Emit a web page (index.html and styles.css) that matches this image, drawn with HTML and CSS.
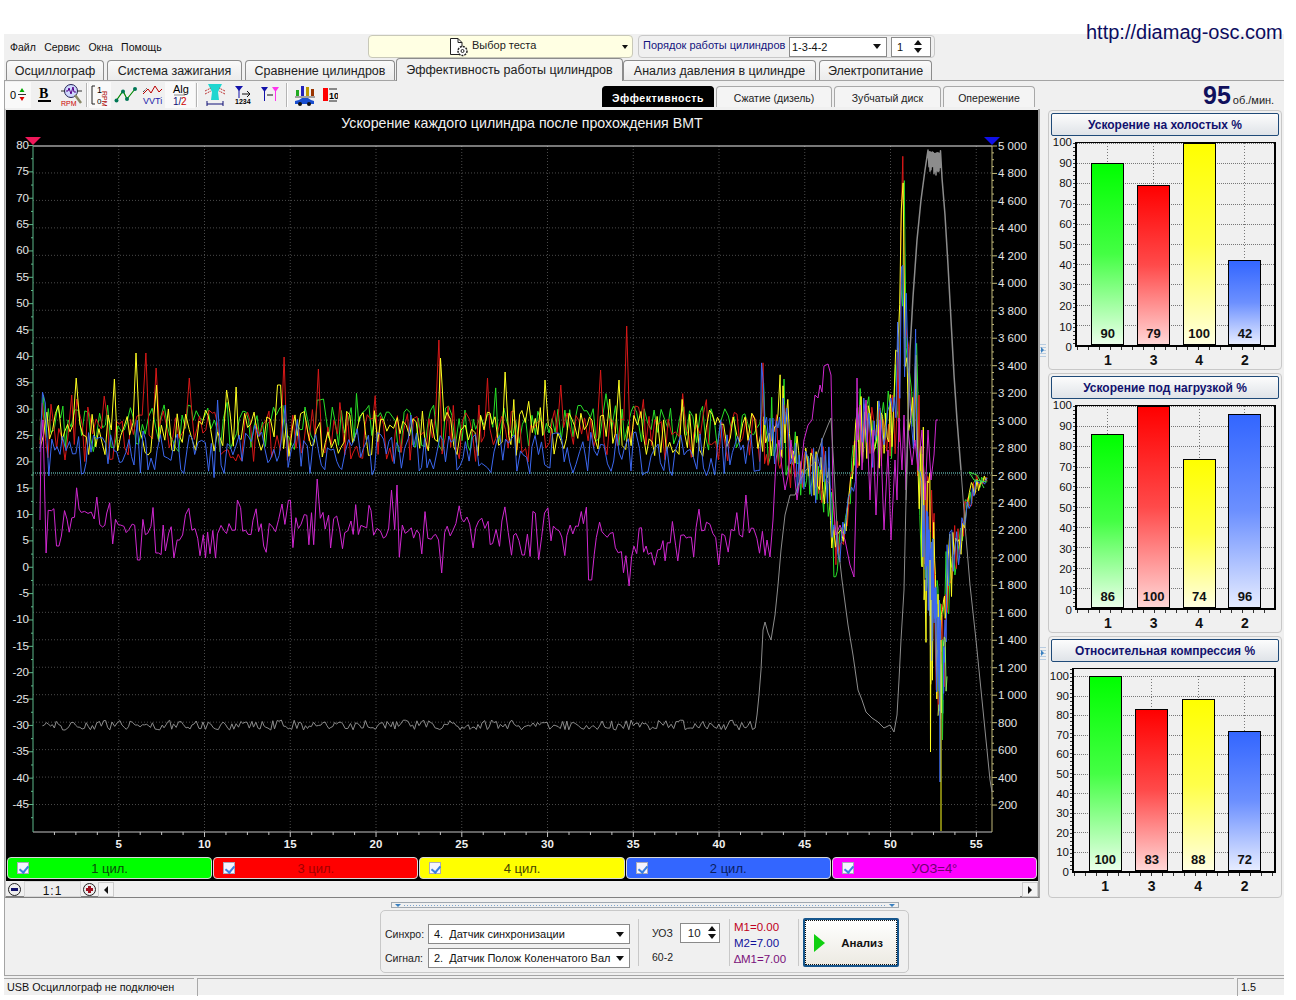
FILE: index.html
```html
<!DOCTYPE html>
<html lang="ru">
<head>
<meta charset="utf-8">
<title>Эффективность работы цилиндров</title>
<link rel="stylesheet" href="styles.css">
</head>
<body>
<a class="site-link">http://diamag-osc.com</a>
<div class="app">
  <div class="topbar">
    <nav class="menu"><span>Файл</span><span>Сервис</span><span>Окна</span><span>Помощь</span></nav>
    <div class="test-select">
      <svg class="doc-icon" width="22" height="20" viewBox="0 0 22 20"><path d="M2.500 1.500H10L14 5.500V17.500H2.500Z" fill="#fff" stroke="#222"/><path d="M10 1.500V5.500H14" fill="none" stroke="#222"/><circle cx="14.500" cy="14" r="4.500" fill="#fff" stroke="#222" stroke-dasharray="2 1" stroke-width="1.500"/><circle cx="14.500" cy="14" r="1.500" fill="none" stroke="#222"/></svg>
      <span class="test-label">Выбор теста</span>
      <i class="caret caret-end"></i>
    </div>
    <div class="order">
      <span class="order-label">Порядок работы цилиндров</span>
      <div class="combo combo-order"><span>1-3-4-2</span><i class="caret"></i></div>
      <div class="spin spin-order"><span>1</span><b class="spin-btns"><i class="up"></i><i class="down"></i></b></div>
    </div>
  </div>
  <div class="tabs">
    <div class="tab t1">Осциллограф</div>
    <div class="tab t2">Система зажигания</div>
    <div class="tab t3">Сравнение цилиндров</div>
    <div class="tab t4 active">Эффективность работы цилиндров</div>
    <div class="tab t5">Анализ давления в цилиндре</div>
    <div class="tab t6">Электропитание</div>
  </div>
  <main class="panel">
    <div class="toolbar">
      <div class="tools">
        <span class="tool on w1"><svg width="18" height="16" viewBox="0 0 18 16"><text x="1" y="12" class="ti" font-size="11">0</text><path d="M9 7.500H17" stroke="#333"/><path d="M13 1L10.500 5H15.500Z" fill="#0a0"/><path d="M13 14L10.500 10H15.500Z" fill="#d00"/></svg></span>
        <span class="tool w2"><svg width="16" height="16" viewBox="0 0 16 16"><text x="2" y="11" class="ti ti-serif" font-size="14" font-weight="bold">B</text><path d="M1 14H14" stroke="#000" stroke-width="2"/></svg></span>
        <span class="tool w3"><svg width="24" height="24" viewBox="0 0 24 24"><circle cx="11" cy="8" r="6.500" fill="#cfd8ff" stroke="#225"/><path d="M6 8L8 8L9 5L11 11L13 4L14 9H16" fill="none" stroke="#508"/><path d="M1 8H5M17 8H22" stroke="#333"/><path d="M15 12L21 20" stroke="#886" stroke-width="2.500"/><text x="1" y="23" class="ti" font-size="7" fill="#c00">RPM</text></svg></span>
        <i class="tool-sep"></i>
        <span class="tool on w4"><svg width="18" height="22" viewBox="0 0 18 22"><path d="M4 2H1V20H4" fill="none" stroke="#222"/><text x="6" y="9" class="ti" font-size="9">1</text><text x="6" y="20" class="ti" font-size="8">0</text><text x="17" y="1" class="ti" font-size="7" fill="#a00" transform="rotate(90 11 1)">RPM</text></svg></span>
        <span class="tool w5"><svg width="24" height="18" viewBox="0 0 24 18"><path d="M2 15L9 5L13 13L21 3" fill="none" stroke="#080" stroke-width="1.200"/><circle cx="2.500" cy="14.500" r="2" fill="#075"/><circle cx="9" cy="5.500" r="2" fill="#075"/><circle cx="13" cy="13" r="2" fill="#075"/><circle cx="21" cy="3" r="2" fill="#075"/></svg></span>
        <span class="tool w6"><svg width="22" height="22" viewBox="0 0 22 22"><path d="M1 10L6 5L9 9L13 2L17 8L20 5" fill="none" stroke="#b00"/><path d="M1 8L5 4" stroke="#000" stroke-dasharray="1 1"/><text x="1" y="20" class="ti" font-size="9" fill="#22a">VVTi</text></svg></span>
        <span class="tool on w7"><svg width="18" height="24" viewBox="0 0 18 24"><text x="2" y="10" class="ti" font-size="11">Alg</text><path d="M3 12H14" stroke="#888"/><text x="2" y="22" class="ti" font-size="10" fill="#117">1/</text><text x="10" y="22" class="ti" font-size="10" fill="#c00">2</text></svg></span>
        <i class="tool-sep"></i>
        <span class="tool w8"><svg width="22" height="24" viewBox="0 0 22 24"><path d="M4 1H18L14 9L15 17H7L8 9Z" fill="#1fd6d0"/><path d="M1 8L7 5M21 8L15 5M1 11L7 8M21 11L15 8" stroke="#b33" stroke-dasharray="2 1"/><path d="M3 21H19M3 18V23M19 18V23" stroke="#117"/></svg></span>
        <span class="tool w9"><svg width="18" height="20" viewBox="0 0 18 20"><path d="M1 1H9L5 6Z" fill="#11a"/><path d="M5 5V13" stroke="#11a"/><path d="M8 9H16M13 6L16 9L13 12" fill="none" stroke="#111"/><text x="1" y="19" class="ti" font-size="7" font-weight="bold">1234</text></svg></span>
        <span class="tool w10"><svg width="18" height="18" viewBox="0 0 18 18"><path d="M0 1H7L3.500 6Z" fill="#11a"/><path d="M3.500 5V15" stroke="#11a"/><path d="M11 1H18L14.500 6Z" fill="#f3e"/><path d="M14.500 5V15" stroke="#f3e"/><path d="M6 9H12" stroke="#111"/></svg></span>
        <i class="tool-sep"></i>
        <span class="tool w11"><svg width="22" height="22" viewBox="0 0 22 22"><rect x="2" y="6" width="3" height="6" fill="#2a2"/><rect x="7" y="2" width="3" height="10" fill="#22b"/><rect x="12" y="3" width="3" height="9" fill="#b90"/><rect x="17" y="5" width="3" height="7" fill="#930"/><path d="M1 13H21" stroke="#555"/><path d="M1 20V17L5 16L8 14H14L17 16L20 17V20Z" fill="#1a4fd0"/><circle cx="6" cy="20" r="2" fill="#111"/><circle cx="15" cy="20" r="2" fill="#111"/></svg></span>
        <span class="tool w12"><svg width="16" height="18" viewBox="0 0 16 18"><rect x="1" y="2" width="5" height="13" fill="#f00"/><text x="7" y="13" class="ti" font-size="9" font-weight="bold">10</text><path d="M7 3H15M7 15H15" stroke="#222"/></svg></span>
      </div>
      <div class="subtabs">
        <div class="subtab s1 active">Эффективность</div>
        <div class="subtab s2">Сжатие (дизель)</div>
        <div class="subtab s3">Зубчатый диск</div>
        <div class="subtab s4">Опережение</div>
      </div>
      <div class="rpm"><b>95</b><span>об./мин.</span></div>
    </div>
    <div class="work">
      <section class="scope">
        <svg id="chart" class="chart" width="1032" height="747" viewBox="6 110 1032 747"></svg>
        <div class="legend">
          <label class="leg green"><i class="check"></i><span>1 цил.</span></label>
          <label class="leg red"><i class="check"></i><span>3 цил.</span></label>
          <label class="leg yellow"><i class="check"></i><span>4 цил.</span></label>
          <label class="leg blue"><i class="check"></i><span>2 цил.</span></label>
          <label class="leg magenta"><i class="check"></i><span>УОЗ=4°</span></label>
        </div>
        <div class="zoombar">
          <i class="zoom-btn minus"></i>
          <span class="scale">1:1</span>
          <i class="zoom-btn plus"></i>
          <i class="arrow-btn left"></i>
          <span class="track"></span>
          <i class="arrow-btn right"></i>
        </div>
      </section>
      <div class="splitter"><i></i><i class="second"></i></div>
      <aside class="stats">
        <section class="stat">
          <h2 class="stat-head">Ускорение на холостых %</h2>
          <div class="stat-body">
            <div class="yaxis"><span>100</span><span>90</span><span>80</span><span>70</span><span>60</span><span>50</span><span>40</span><span>30</span><span>20</span><span>10</span><span>0</span></div>
            <div class="plot"><div class="area">
              <div class="hgrid"><i></i><i></i><i></i><i></i><i></i><i></i><i></i><i></i><i></i><i></i></div>
              <div class="vgrid"><i></i><i></i><i></i><i></i></div>
              <div class="bars">
                <div class="slot"><div class="bar g" style="height:90%"><span>90</span></div></div>
                <div class="slot"><div class="bar r" style="height:79%"><span>79</span></div></div>
                <div class="slot"><div class="bar y" style="height:100%"><span>100</span></div></div>
                <div class="slot"><div class="bar b" style="height:42%"><span>42</span></div></div>
              </div>
            </div></div>
          </div>
          <div class="xaxis"><span>1</span><span>3</span><span>4</span><span>2</span></div>
        </section>
        <section class="stat">
          <h2 class="stat-head">Ускорение под нагрузкой %</h2>
          <div class="stat-body">
            <div class="yaxis"><span>100</span><span>90</span><span>80</span><span>70</span><span>60</span><span>50</span><span>40</span><span>30</span><span>20</span><span>10</span><span>0</span></div>
            <div class="plot"><div class="area">
              <div class="hgrid"><i></i><i></i><i></i><i></i><i></i><i></i><i></i><i></i><i></i><i></i></div>
              <div class="vgrid"><i></i><i></i><i></i><i></i></div>
              <div class="bars">
                <div class="slot"><div class="bar g" style="height:86%"><span>86</span></div></div>
                <div class="slot"><div class="bar r" style="height:100%"><span>100</span></div></div>
                <div class="slot"><div class="bar y" style="height:74%"><span>74</span></div></div>
                <div class="slot"><div class="bar b" style="height:96%"><span>96</span></div></div>
              </div>
            </div></div>
          </div>
          <div class="xaxis"><span>1</span><span>3</span><span>4</span><span>2</span></div>
        </section>
        <section class="stat wide">
          <h2 class="stat-head">Относительная компрессия %</h2>
          <div class="stat-body">
            <div class="yaxis"><span>100</span><span>90</span><span>80</span><span>70</span><span>60</span><span>50</span><span>40</span><span>30</span><span>20</span><span>10</span><span>0</span></div>
            <div class="plot"><div class="area">
              <div class="hgrid"><i></i><i></i><i></i><i></i><i></i><i></i><i></i><i></i><i></i><i></i></div>
              <div class="vgrid"><i></i><i></i><i></i><i></i></div>
              <div class="bars">
                <div class="slot"><div class="bar g" style="height:100%"><span>100</span></div></div>
                <div class="slot"><div class="bar r" style="height:83%"><span>83</span></div></div>
                <div class="slot"><div class="bar y" style="height:88%"><span>88</span></div></div>
                <div class="slot"><div class="bar b" style="height:72%"><span>72</span></div></div>
              </div>
            </div></div>
          </div>
          <div class="xaxis"><span>1</span><span>3</span><span>4</span><span>2</span></div>
        </section>
      </aside>
    </div>
    <div class="lower">
      <div class="expander"><i class="tri"></i><span class="dots"></span><i class="tri"></i></div>
      <div class="controls">
        <div class="ctl-signals">
          <div class="ctl-row"><label>Синхро:</label><div class="combo combo-wide"><span>4.&nbsp; Датчик синхронизации</span><i class="caret"></i></div></div>
          <div class="ctl-row"><label>Сигнал:</label><div class="combo combo-wide"><span>2.&nbsp; Датчик Полож Коленчатого Вал</span><i class="caret"></i></div></div>
        </div>
        <i class="ctl-sep"></i>
        <div class="ctl-uoz">
          <div class="uoz-row"><span>УОЗ</span><div class="spin spin-uoz"><span>10</span><b class="spin-btns"><i class="up"></i><i class="down"></i></b></div></div>
          <div class="teeth">60-2</div>
        </div>
        <i class="ctl-sep"></i>
        <div class="markers">
          <span class="m1">M1=0.00</span>
          <span class="m2">M2=7.00</span>
          <span class="m3">∆M1=7.00</span>
        </div>
        <i class="ctl-sep"></i>
        <button class="analyze"><i class="play"></i><span>Анализ</span></button>
      </div>
    </div>
  </main>
  <footer class="status">
    <span class="st1">USB Осциллограф не подключен</span>
    <span class="st2"></span>
    <span class="st3">1.5</span>
  </footer>
</div>
<script src="script.js"></script>
</body>
</html>
```
FILE: styles.css
```css
* { box-sizing: border-box; }
html, body { margin: 0; padding: 0; background: #fff; }
body { width: 1296px; height: 1000px; overflow: hidden; font-family: "Liberation Sans", Arial, sans-serif; font-size: 11px; color: #111; }
i { display: block; font-style: normal; }

.site-link { position: absolute; left: 1086px; top: 20px; font-size: 20px; line-height: 24px; color: #0c0c60; }
.app { margin: 34px 0 0 4px; width: 1280px; height: 961px; background: #f0f0f0; display: flex; flex-direction: column; }

.topbar { height: 24px; display: flex; align-items: flex-start; }
.menu { width: 364px; padding: 7px 0 0 6px; display: flex; gap: 8.3px; line-height: 13px; font-size: 10.5px; }
.test-select { width: 265px; height: 23px; margin-top: 1px; border: 1px solid #c8c8b8; border-radius: 4px; background: #ffffe3; display: flex; align-items: center; padding: 0 4px 0 79px; }
.doc-icon { flex: none; margin-right: 2px; }
.test-label { flex: 1; font-size: 11px; line-height: 13px; padding-bottom: 2px; color: #222; }
.caret { width: 0; height: 0; border-left: 4px solid transparent; border-right: 4px solid transparent; border-top: 5px solid #111; flex: none; }
.caret-end { border-left-width: 3px; border-right-width: 3px; border-top-width: 4px; }
.order { margin-left: 5px; width: 297px; height: 23px; margin-top: 1px; border: 1px solid #c8c8c8; border-radius: 4px; display: flex; align-items: center; padding-left: 4px; }
.order-label { width: 146px; color: #14147e; font-size: 11px; line-height: 13px; padding-bottom: 2px; white-space: nowrap; }
.combo { background: #fff; border: 1px solid #8a8a8a; display: flex; align-items: center; justify-content: space-between; white-space: nowrap; font-size: 11px; }
.combo-order { width: 98px; height: 20px; padding: 0 5px 0 2px; }
.spin { background: #fff; border: 1px solid #8a8a8a; display: flex; align-items: center; justify-content: space-between; font-size: 11px; }
.spin-order { width: 40px; height: 20px; margin-left: 4px; padding: 0 8px 0 5px; }
.spin-btns { display: flex; flex-direction: column; gap: 3px; }
.up, .down { width: 0; height: 0; border-left: 4px solid transparent; border-right: 4px solid transparent; }
.up { border-bottom: 5px solid #111; }
.down { border-top: 5px solid #111; }

.tabs { height: 22px; display: flex; align-items: flex-end; gap: 3px; padding-left: 2px; position: relative; z-index: 2; }
.tab { height: 20px; border: 1px solid #8c8c8c; border-bottom: 0; border-radius: 4px 4px 0 0; background: linear-gradient(#fafafa, #ebebeb); font-size: 12.5px; line-height: 20px; text-align: center; white-space: nowrap; color: #222; }
.tab.active { height: 23px; margin: 0 -3px -1px -2px; background: #f0f0f0; line-height: 22px; }
.t1 { width: 98px; } .t2 { width: 135px; } .t3 { width: 150px; } .t4 { width: 227px; } .t5 { width: 193px; } .t6 { width: 113px; }

.panel { height: 896px; border: 1px solid #a4a4a4; border-width: 1px 0 1px 1px; display: flex; flex-direction: column; background: #f0f0f0; }
.toolbar { height: 28px; display: flex; position: relative; }
.tools { width: 597px; height: 27px; display: flex; align-items: center; }
.tool { height: 26px; display: flex; align-items: center; justify-content: center; flex: none; }
.tool.on { background: #f9f9f9; }
.ti { font-family: "Liberation Sans", Arial, sans-serif; }
.ti-serif { font-family: "Liberation Serif", serif; }
.w1 { width: 26px; } .w2 { width: 27px; } .w3 { width: 27px; } .w4 { width: 22px; } .w5 { width: 30px; } .w6 { width: 24px; } .w7 { width: 30px; }
.w8 { width: 31px; } .w9 { width: 25px; } .w10 { width: 30px; } .w11 { width: 32px; } .w12 { width: 18px; }
.tool-sep { width: 2px; height: 24px; background: #b4b4b4; border-right: 1px solid #fff; margin: 0 1px; flex: none; }
.subtabs { display: flex; align-items: flex-end; height: 26px; gap: 2px; padding-top: 5px; }
.subtab { height: 21px; border: 1px solid #a8a8a8; border-bottom: 0; border-radius: 4px 4px 0 0; font-size: 10.5px; line-height: 23px; text-align: center; background: #f4f4f4; color: #222; white-space: nowrap; }
.subtab.active { background: #000; color: #fff; border-color: #000; font-weight: bold; letter-spacing: .55px; }
.s1 { width: 112px; } .s2 { width: 116px; } .s3 { width: 107px; } .s4 { width: 92px; }
.rpm { position: absolute; left: 1198px; top: 1px; display: flex; align-items: baseline; gap: 2px; color: #10105c; line-height: 26px; }
.rpm b { font-size: 25px; }
.rpm span { font-size: 11px; color: #222; }

.work { height: 789px; display: flex; }
.scope { width: 1035px; border-right: 2px solid #a0a0a0; border-bottom: 2px solid #808080; border-left: 1px solid #c8c8c8; display: flex; flex-direction: column; }
.chart { display: block; flex: none; background: #000; margin-top: 1px; }
.chart text { font-family: "Liberation Sans", Arial, sans-serif; }
.legend { height: 24px; background: #000; display: flex; gap: 1px; padding: 0 1px; width: 1032px; flex: none; }
.leg { flex: 1; height: 22px; border: 1px solid #d8d8d8; border-radius: 4px; display: flex; align-items: center; position: relative; justify-content: center; font-size: 13px; }
.check { position: absolute; left: 9px; top: 4px; width: 12px; height: 12px; background: #f4f4ff; border: 1px solid #aab; }
.check::after { content: ""; position: absolute; left: 3px; top: 1px; width: 4px; height: 7px; border: solid #3a80e0; border-width: 0 2px 2px 0; transform: rotate(40deg); }
.green { background: #00ff00; color: #0a4a0a; }
.red { background: #ff0000; color: #a00000; }
.yellow { background: #ffff00; color: #444400; }
.blue { background: #3366ff; color: #0a1e60; }
.magenta { background: #ff00ff; color: #700070; }
.zoombar { height: 16px; display: flex; align-items: center; width: 1032px; flex: none; }
.zoom-btn { width: 13px; height: 13px; margin-left: 2px; border-radius: 50%; border: 1px solid #222; background: #eee; position: relative; flex: none; }
.minus::after { content: ""; position: absolute; left: 2px; top: 4px; width: 7px; height: 3px; background: #12126a; }
.plus::before, .plus::after { content: ""; position: absolute; background: #a01020; }
.plus::before { left: 2px; top: 4px; width: 7px; height: 3px; }
.plus::after { left: 4px; top: 2px; width: 3px; height: 7px; }
.scale { width: 57px; height: 16px; margin-left: 3px; font-size: 12px; line-height: 18px; text-align: center; background: #eee; border: 1px solid #d6d6d6; letter-spacing: 1px; flex: none; }
.arrow-btn { width: 16px; height: 15px; background: #f4f4f4; border: 1px solid #ccc; position: relative; flex: none; margin-left: 2px; }
.arrow-btn::after { content: ""; position: absolute; top: 3px; left: 5px; border-top: 4px solid transparent; border-bottom: 4px solid transparent; }
.left::after { border-right: 4px solid #111; }
.right::after { border-left: 4px solid #111; }
.track { flex: 1; height: 15px; background: #f0f0f0; }

.splitter { width: 8px; position: relative; }
.splitter i { position: absolute; left: 0; top: 235px; width: 6px; height: 14px; background: repeating-linear-gradient(#b8cce0 0 1px, #f0f0f0 1px 3px); }
.splitter i::after { content: ""; position: absolute; left: 1px; top: 3px; border-top: 3px solid transparent; border-bottom: 3px solid transparent; border-left: 3px solid #3a80c0; }
.splitter .second { top: 538px; }
.stats { width: 235px; padding-top: 1px; display: flex; flex-direction: column; gap: 3px; }
.stat { width: 234px; height: 260px; border: 1px solid #c8c8c8; border-radius: 4px; padding: 2px 2px 0; }
.stat-head { margin: 0 0 6px; height: 23px; border: 1px solid #1f4a78; border-radius: 2px; background: linear-gradient(#fcfcfc, #dfe3e8); font-size: 12px; line-height: 22px; font-weight: bold; text-align: center; color: #12126e; }
.stat-body { display: flex; height: 205px; }
.yaxis { width: 24px; height: 219px; margin-top: -7px; flex: none; display: flex; flex-direction: column; justify-content: space-between; align-items: flex-end; padding-right: 3px; font-size: 11.5px; line-height: 14px; color: #111; }
.plot { width: 201px; height: 205px; border: solid #000; border-width: 1px 2px 2px 2px; display: flex; flex-direction: column; justify-content: flex-end; position: relative; }
.plot::before { content: ""; position: absolute; left: -4px; top: 0; bottom: 0; width: 2px; background: repeating-linear-gradient(#333 0 1px, transparent 1px 4px); }
.plot::after { content: ""; position: absolute; left: 0; right: 0; bottom: -5px; height: 3px; background: repeating-linear-gradient(90deg, #333 0 1px, transparent 1px 11px); }
.area { height: 100%; position: relative; flex: none; }
.hgrid { position: absolute; inset: 0; display: flex; flex-direction: column; }
.hgrid i { flex: 1; border-top: 1px dotted #777; }
.vgrid { position: absolute; inset: 0; padding-left: 8px; display: flex; }
.vgrid i { width: 45.7px; height: 100%; background: repeating-linear-gradient(#777 0 1px, transparent 1px 3px) center / 1px 100% no-repeat; }
.bars { position: absolute; inset: 0; padding-left: 8px; display: flex; align-items: flex-end; }
.slot { width: 45.7px; height: 100%; display: flex; justify-content: center; align-items: flex-end; }
.bar { width: 33px; border: 1px solid #000; display: flex; justify-content: center; align-items: flex-end; position: relative; }
.bar span { font-size: 13px; font-weight: bold; line-height: 14px; margin-bottom: 3px; color: #111; }
.bar.g { background: linear-gradient(#00ff00 0, #44ff44 50%, #eaffea 100%); }
.bar.r { background: linear-gradient(#ff0000 0, #ff4a4a 50%, #ffd6d6 100%); }
.bar.y { background: linear-gradient(#ffff00 0, #ffff4a 50%, #ffffe0 100%); }
.bar.b { background: linear-gradient(#3366ff 0, #6c90ff 50%, #e6ecff 100%); }
.xaxis { display: flex; padding-left: 34px; height: 21px; align-items: flex-end; font-size: 14px; font-weight: bold; line-height: 16px; color: #111; }
.xaxis span { width: 45.7px; text-align: center; }
.wide { height: 262px; }
.wide .yaxis { width: 21px; height: 210px; margin-top: 1px; }
.wide .plot { width: 204px; }
.wide .area { height: 195px; }
.wide .xaxis { padding-left: 31px; }
.wide .slot, .wide .vgrid i, .wide .xaxis span { width: 46.5px; }

.lower { height: 77px; padding-left: 375px; position: relative; }
.expander { width: 508px; height: 6px; margin: 4px 0 0 11px; border: 1px solid #a0a8b0; display: flex; align-items: center; justify-content: space-between; padding: 0 3px; }
.tri { width: 0; height: 0; border-left: 3px solid transparent; border-right: 3px solid transparent; border-top: 3px solid #3a80c0; flex: none; }
.dots { flex: 1; height: 1px; margin: 0 3px; background: repeating-linear-gradient(90deg, #7aa4d0 0 1px, transparent 1px 3px); }
.controls { width: 529px; height: 63px; margin-top: 2px; border: 1px solid #c8c8c8; border-radius: 5px; display: flex; align-items: center; padding-left: 4px; }
.ctl-signals { width: 253px; flex: none; display: flex; flex-direction: column; gap: 4px; padding-top: 9px; }
.ctl-row { display: flex; align-items: center; height: 20px; }
.ctl-row label { width: 43px; font-size: 10.5px; color: #222; flex: none; }
.combo-wide { width: 202px; height: 20px; padding: 0 5px; }
.ctl-sep { width: 1px; height: 47px; background: #c8c8c8; margin-top: 2px; flex: none; }
.ctl-uoz { width: 90px; flex: none; padding: 2px 0 0 13px; font-size: 10.5px; color: #222; }
.uoz-row { display: flex; align-items: center; gap: 6px; height: 20px; }
.spin-uoz { width: 40px; height: 20px; margin-left: 1px; padding: 0 3px 0 7px; font-size: 11.5px; }
.teeth { margin-top: 8px; }
.markers { width: 68px; flex: none; padding-left: 4px; display: flex; flex-direction: column; gap: 3px; font-size: 11.5px; line-height: 13px; margin-top: 4px; }
.m1 { color: #c00020; } .m2 { color: #10109a; } .m3 { color: #7a107a; }
.analyze { width: 96px; height: 49px; margin-left: 4px; margin-top: 2px; padding: 0; border: 2px solid #15558c; border-radius: 2px; outline: 1px dotted #111; outline-offset: -3px; background: linear-gradient(#fff, #eceae2); font: bold 11.5px "Liberation Sans", Arial, sans-serif; color: #111; position: relative; }
.play { position: absolute; left: 9px; top: 14px; width: 0; height: 0; border-left: 11px solid #10d010; border-top: 9px solid transparent; border-bottom: 9px solid transparent; }
.analyze span { position: relative; left: 11px; }

.status { height: 19px; margin-top: 2px; display: flex; gap: 3px; font-size: 10.8px; line-height: 17px; }
.status span { display: block; border: solid #a8a8a8; border-width: 1px 0 0 1px; padding-left: 3px; }
.st1 { width: 190px; border-left-width: 0 !important; } .st2 { flex: 1; } .st3 { width: 47px; }
```
FILE: script.js
```js
(function () {
  var svg = document.getElementById('chart');
  var seed = 7741;
  function rnd() { seed = (seed * 1664525 + 1013904223) >>> 0; var t = seed ^ (seed >>> 15); t = Math.imul(t ^ (t >>> 7), 0x6d2b79f5) >>> 0; return t / 4294967296; }
  var out = [];
  function line(x1, y1, x2, y2, cls) { out.push('<line x1="' + x1 + '" y1="' + y1 + '" x2="' + x2 + '" y2="' + y2 + '" ' + cls + '/>'); }
  function text(x, y, s, a) { out.push('<text x="' + x + '" y="' + y + '" ' + a + '>' + s + '</text>'); }
  function poly(pts, color, w) { out.push('<polyline fill="none" stroke="' + color + '" stroke-width="' + (w || 1) + '" stroke-linejoin="round" points="' + pts.map(function (p) { return p[0].toFixed(1) + ',' + p[1].toFixed(1); }).join(' ') + '"/>'); }
  function interp(tab, x) {
    if (x <= tab[0][0]) return tab[0].slice(1);
    for (var i = 1; i < tab.length; i++) {
      if (x <= tab[i][0]) {
        var a = tab[i - 1], b = tab[i], k = (x - a[0]) / (b[0] - a[0]), r = [];
        for (var j = 1; j < a.length; j++) r.push(a[j] + (b[j] - a[j]) * k);
        return r;
      }
    }
    return tab[tab.length - 1].slice(1);
  }
  var L = 33, R = 992, T = 146, B = 832;
  var grid = 'stroke="#4a4a4a" stroke-dasharray="1 2"';
  var i, x, y;
  for (i = 1; i < 25; i++) { y = B - i * 27.46; line(L, y, R, y, grid); }
  for (i = 5; i <= 55; i += 5) { x = L + i * 17.15; line(x, T, x, B, grid); }
  line(33, 473, 992, 473, 'stroke="#7fe8e0" stroke-dasharray="1 1"');
  line(L, T, R, T, 'stroke="#f0f0f0"');
  line(L, B, R, B, 'stroke="#c4c4c4"');
  line(L, T, L, B, 'stroke="#5cb88a"');
  line(R, T, R, B, 'stroke="#c0b878"');
  // axis ticks + labels
  var lab = 'fill="#e4e4e4" font-size="11.5"';
  for (i = 0; i <= 25; i++) {
    y = 145.5 + i * 26.36;
    line(L - 5, y, L, y, 'stroke="#5cb88a"');
    line(L - 2, y + 13.2, L, y + 13.2, 'stroke="#5cb88a"');
    text(29, y + 3.5, String(80 - i * 5), lab + ' text-anchor="end"');
  }
  for (i = 0; i <= 24; i++) {
    y = T + i * 27.46;
    line(R, y, R + 5, y, 'stroke="#c0b878"');
    for (var m = 1; m < 4; m++) if (i < 24) line(R, y + m * 6.86, R + 2, y + m * 6.86, 'stroke="#c0b878"');
    var v = 5000 - i * 200;
    var s = v >= 1000 ? Math.floor(v / 1000) + ' ' + (v % 1000 === 0 ? '000' : String(v % 1000).padStart(3, '0')) : String(v);
    text(998, y + 4, s, lab);
  }
  for (i = 1; i <= 44; i++) {
    x = L + i * 21.44;
    var major = i % 4 === 0;
    line(x, B, x, B + (major ? 5 : 3), 'stroke="#c4c4c4"');
  }
  for (i = 5; i <= 55; i += 5) text(L + i * 17.15, 848, String(i), 'fill="#f0f0f0" font-size="11.5" font-weight="bold" text-anchor="middle"');
  text(522, 128, 'Ускорение каждого цилиндра после прохождения ВМТ', 'fill="#f0f0f0" font-size="14.2" text-anchor="middle"');
  out.push('<path d="M25 137H41L33 145Z" fill="#f0185a"/><path d="M984 137H1000L992 145Z" fill="#1010e8"/>');

  // envelope of the disturbed end of the trace
  var env = [
    [758, 420, 470], [761, 310, 470], [765, 375, 470], [770, 405, 465], [775, 375, 470], [783, 352, 470], [790, 420, 490],
    [800, 442, 495], [810, 445, 500], [820, 440, 510], [830, 430, 520], [834, 480, 586], [838, 530, 575], [843, 520, 548],
    [848, 500, 522], [852, 455, 500], [858, 385, 470], [865, 395, 462], [875, 395, 472], [885, 400, 465], [893, 370, 465],
    [896, 340, 465], [900, 260, 450], [902, 160, 420], [904, 150, 400], [906, 260, 430], [908, 340, 450], [912, 370, 480],
    [914, 400, 470], [916, 305, 470], [918, 330, 500], [921, 400, 560],
    [925, 420, 630], [930, 470, 700], [935, 500, 670], [940, 600, 770], [943, 600, 735], [948, 500, 620], [953, 510, 590],
    [958, 520, 575], [965, 495, 530], [975, 475, 495], [987, 476, 482]
  ];
  var specs = [
    { c: '#28e028', top: 405, bot: 452, sp: [[42, 395], [318, 400], [761, 308]] },
    { c: '#d81818', top: 410, bot: 462, sp: [[145, 353], [155, 368], [188, 378], [283, 357], [318, 369], [440, 340], [560, 385], [628, 326], [487, 378], [602, 370], [903, 150], [72, 395]] },
    { c: '#ffff20', top: 410, bot: 458, sp: [[75, 378], [115, 379], [136, 353], [156, 385], [225, 390], [236, 387], [279, 385], [440, 358], [506, 372], [545, 380], [618, 380], [761, 312], [903, 158]] },
    { c: '#3c68f0', top: 432, bot: 478, sp: [[42, 392], [46, 403], [218, 400], [286, 405], [917, 302], [898, 300]] }
  ];
  specs.forEach(function (sp, idx) {
    var pts = [[40, 440 + idx * 4]], x = 40;
    while (x < 758) {
      x += 2.2 + rnd() * 1.6;
      var r = rnd(), yy = sp.top + (sp.bot - sp.top) * (r * r * .4 + r * .6);
      if (rnd() < .04) yy = sp.top - rnd() * 18;
      sp.sp.forEach(function (q) { if (Math.abs(q[0] - x) < 1.8 && q[0] < 758) yy = q[1]; });
      pts.push([x, yy]);
    }
    while (x < 987) {
      var st = x > 920 && x < 948 ? .7 : 1.3;
      x += st + rnd() * .8;
      var e = interp(env, x), k = rnd();
      var bias = idx === 3 && x > 920 ? .2 + k * .8 : k;
      var yy2 = e[0] + (e[1] - e[0]) * bias;
      if (idx < 3 && x > 900 && x < 906 && rnd() < .4) yy2 = e[0] + rnd() * 30;
      if (idx === 0 && x > 832 && x < 838) yy2 = e[1] - rnd() * 12;
      pts.push([Math.min(x, 987), yy2]);
    }
    poly(pts, sp.c);
  });
  // solid core of the deep plunge
  var core = [], cx;
  for (cx = 926; cx < 945; cx += .45) { var ce = interp(env, cx); core.push([cx, ce[0] + (ce[1] - ce[0]) * (.25 + rnd() * .55)]); }
  poly(core, '#3c68f0', 1.3);
  var gl = []; for (cx = 938; cx < 947; cx += .9) gl.push([cx, 590 + rnd() * 130]); poly(gl, '#90e860');
  poly([[930, 560], [930.5, 752], [931, 600]], '#ffff20');
  poly([[939.5, 600], [940, 782], [940.5, 620]], '#3c68f0');
  poly([[941, 640], [941, 831]], '#ffff20');
  poly([[942.5, 640], [942.5, 740], [943, 700]], '#28c828');
  poly([[984, 488], [977, 475], [969, 472], [974, 480], [987, 482]], '#40e040');

  // ignition advance (magenta)
  var mTrend = [[40, 515], [80, 512], [110, 522], [200, 535], [320, 520], [360, 530], [430, 535], [480, 520], [520, 535], [600, 530], [630, 555], [700, 530], [760, 535]];
  var mSp = [[42, 470], [46, 553], [58, 546], [137, 560], [140, 560], [157, 553], [175, 558], [317, 479], [238, 500], [442, 573], [397, 485], [523, 555], [590, 580], [628, 586], [392, 490], [720, 565], [745, 495], [770, 560]];
  var mp = [[40, 520], [41, 440], [43, 420]], mx = 44;
  while (mx < 765) {
    mx += 2 + rnd() * 1.5;
    var t = interp(mTrend, mx)[0];
    var a = rnd();
    var yy3 = t + (a - .5) * (a > .85 || a < .15 ? 52 : 24);
    mSp.forEach(function (q) { if (Math.abs(q[0] - mx) < 1.8) yy3 = q[1]; });
    mp.push([mx, yy3]);
  }
  [[767, 540], [770, 557], [773, 520], [776, 460], [779, 440], [782, 468], [785, 490], [788, 476], [791, 440], [794, 470], [797, 500], [800, 478], [804, 440], [808, 425], [812, 420], [815, 395], [818, 398], [820, 385], [822, 392], [824, 366], [828, 364], [831, 375], [832, 425], [833, 500], [836, 535], [840, 525], [845, 540], [850, 565], [854, 577], [856, 500], [857, 378], [858, 440], [860, 405], [862, 470], [866, 400], [870, 500], [873, 430], [876, 515], [880, 420], [884, 530], [888, 450], [891, 540], [895, 460], [897, 500], [899, 418], [902, 470], [904, 415], [906, 490], [908, 430], [912, 465], [915, 440], [918, 470], [922, 430], [925, 500], [928, 430], [931, 480], [934, 455], [936, 420], [938, 420]].forEach(function (p) { mp.push(p); });
  poly(mp, '#d028d0');

  // engine speed (grey): thin at low speed, thick around the peak
  var gp = [], gx = 40;
  while (gx < 755) { gx += 1.6 + rnd() * 1.2; gp.push([gx, 725 + (rnd() - .5) * 10]); }
  [[757, 715], [759, 695], [761, 670], [763, 630], [765, 622], [768, 633], [771, 640], [775, 615], [778, 585], [781, 550], [785, 515], [790, 495], [795, 495], [800, 480], [806, 470], [815, 462], [822, 440], [828, 425], [831, 418], [834, 470], [838, 545], [842, 580], [848, 625], [853, 655], [858, 690], [862, 700], [866, 712], [872, 718], [878, 722], [884, 728], [890, 725], [894, 732], [897, 715], [899, 680], [901, 640], [904, 590], [906, 500]].forEach(function (p) { gp.push(p); });
  poly(gp, '#8c8c8c');
  var gt = [[906, 500], [908, 420], [910, 350], [913, 297], [917, 240], [921, 200], [925, 170], [928, 150]];
  for (gx = 929; gx < 941; gx += .5) gt.push([gx, 150 + (Math.round(gx * 2) % 2 ? 0 : 14 + rnd() * 8) + (rnd() * 4)]);
  [[942, 178], [945, 215], [948, 265], [951, 320], [954, 375], [957, 420], [961, 470]].forEach(function (p) { gt.push(p); });
  poly(gt, '#8c8c8c', 1.5);
  poly([[961, 470], [965, 525], [970, 585], [976, 640], [980, 680], [984, 720], [987, 750], [990, 780], [992, 792]], '#8c8c8c');

  svg.innerHTML = out.join('');
})();
```
